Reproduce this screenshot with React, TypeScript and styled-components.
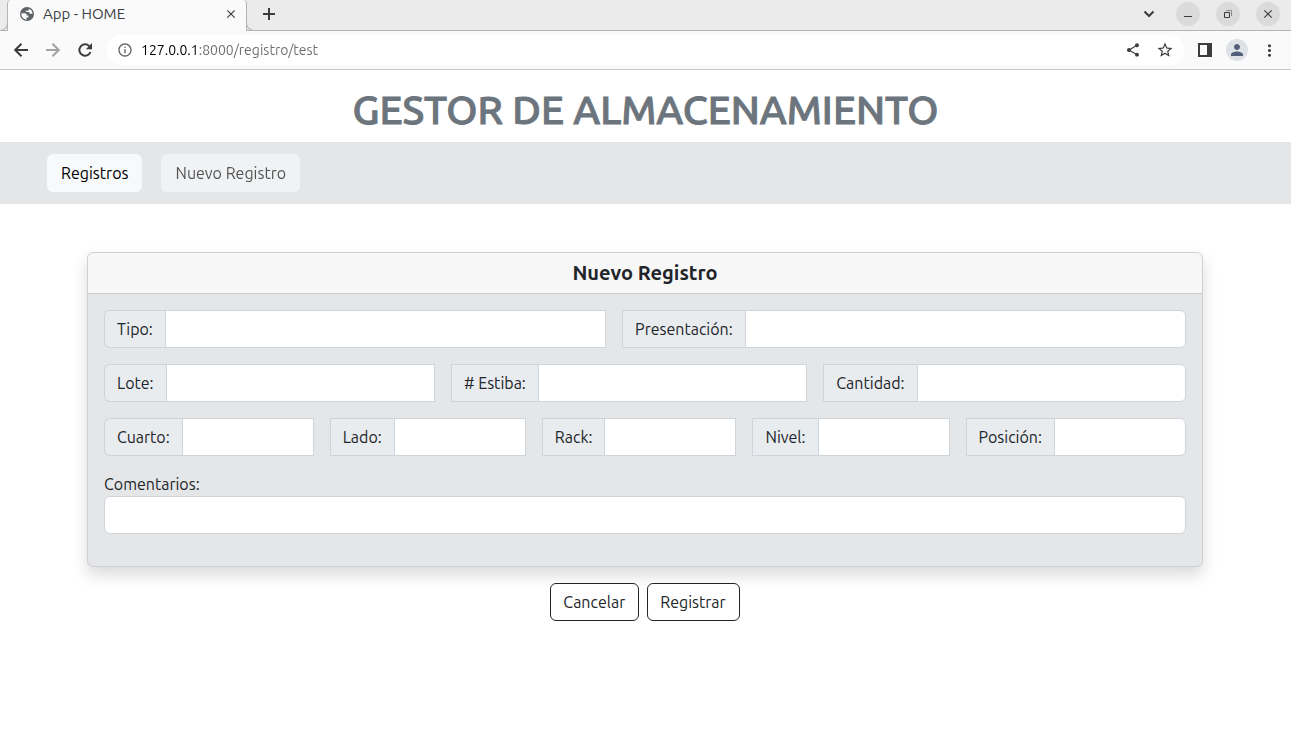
import React from "react";
import styled, { createGlobalStyle, css } from "styled-components";
import {
  MdClose,
  MdInfoOutline,
  MdMoreVert,
  MdPerson,
  MdShare,
  MdStarBorder,
} from "react-icons/md";

const GlobalStyle = createGlobalStyle`
  *, *::before, *::after { box-sizing: border-box; }
  body {
    margin: 0;
    background: #fff;
    color: #212529;
    font-family: Ubuntu, "Noto Sans", sans-serif;
    font-size: 16px;
    line-height: 24px;
  }
  button, input { font: inherit; color: inherit; }
`;

/* ---------- browser frame ---------- */

const TabStrip = styled.div`
  display: flex;
  align-items: center;
  height: 31px;
  padding: 0 11px 0 7px;
  background: #ebebeb;
  border-bottom: 1px solid #b4b4b4;
`;

const Tab = styled.div`
  position: relative;
  display: flex;
  align-items: center;
  align-self: flex-start;
  flex: 0 1 240px;
  height: 31px;
  margin-right: 8px;
  padding: 0 7px 3px 11px;
  background: #fafafa;
  border: solid #b4b4b4;
  border-width: 0 1px;
  border-radius: 4px 4px 0 0;
  color: #3c4043;
  font-size: 15px;

  &::before,
  &::after {
    content: "";
    position: absolute;
    bottom: 0;
    width: 8px;
    height: 8px;
    border-bottom: 1px solid #b4b4b4;
    background: #ebebeb;
  }
  &::before {
    left: -8px;
    border-right: 1px solid #b4b4b4;
    border-bottom-right-radius: 8px;
  }
  &::after {
    right: -8px;
    border-left: 1px solid #b4b4b4;
    border-bottom-left-radius: 8px;
  }
`;

const TabTitle = styled.span`
  flex: 1;
  margin-left: 8px;
`;

const Spacer = styled.div`
  flex: 1;
`;

const IconButton = styled.button<{ $size?: number; $fill?: string; $tone?: string }>`
  display: flex;
  align-items: center;
  justify-content: center;
  flex: none;
  width: ${(p) => p.$size ?? 32}px;
  height: ${(p) => p.$size ?? 32}px;
  padding: 0;
  border: 0;
  border-radius: 50%;
  background: ${(p) => p.$fill ?? "transparent"};
  color: ${(p) => p.$tone ?? "#3c3c3c"};
`;

const ProfileButton = styled(IconButton)`
  margin: 0 5px;
`;

const WindowControls = styled.div`
  display: flex;
  align-items: center;
  gap: 16px;
  padding-bottom: 2px;
`;

const Toolbar = styled.div`
  display: flex;
  align-items: center;
  height: 39px;
  padding: 0 6px 0 5px;
  background: #fafafa;
  border-bottom: 1px solid #c8c8c8;
`;

const AddressBar = styled.div`
  display: flex;
  align-items: center;
  flex: 1;
  height: 30px;
  margin: 0 5px 0 6px;
  padding: 0 3px 0 10px;
  border-radius: 16px;
  background: #fff;
`;

const AddressInput = styled.input`
  flex: 1;
  min-width: 0;
  margin-left: 8px;
  padding: 0;
  border: 0;
  outline: 0;
  color: #5f6368;
  font-size: 14px;
  line-height: 20px;
  background: linear-gradient(to right, #000 57px, #6b6b6b 57px);
  background-clip: text;
  -webkit-background-clip: text;
  -webkit-text-fill-color: transparent;
`;

/* ---------- page ---------- */

const Title = styled.h1`
  margin: 0;
  padding: 16px 16px 8px;
  color: #6c757d;
  font-size: 40px;
  font-weight: 500;
  -webkit-text-stroke: 1px #6c757d;
  line-height: 48px;
  text-align: center;
`;

const Nav = styled.nav`
  display: flex;
  gap: 19px;
  padding: 12px 47px;
  background: #e5e6e8;
`;

const buttonBase = css`
  height: 38px;
  padding: 6px 13px 6px 12px;
  border: 1px solid transparent;
  border-radius: 6px;
`;

const NavButton = styled.button<{ $dimmed?: boolean }>`
  ${buttonBase}
  padding: 6px 13px;
  background: #f8f9fa;
  color: #000;
  opacity: ${(p) => (p.$dimmed ? 0.65 : 1)};
`;

const Form = styled.form`
  max-width: 1141px;
  margin: 48px auto 0;
  padding: 0 13px 0 12px;
`;

const Card = styled.section`
  overflow: hidden;
  border: 1px solid #cfd0d2;
  border-radius: 6px;
  background: #e5e6e8;
  box-shadow: 0 8px 16px rgba(0, 0, 0, 0.15);
`;

const CardHeader = styled.h2`
  margin: 0;
  padding: 8px 16px;
  border-bottom: 1px solid #c9cacc;
  background: #f7f7f7;
  font-size: 20px;
  font-weight: 600;
  line-height: 24px;
  text-align: center;
`;

const CardBody = styled.div`
  display: flex;
  flex-direction: column;
  gap: 16px;
  padding: 16px 16px 32px;
`;

const FieldRow = styled.div`
  display: flex;

  label:first-child { margin-left: 0; border-radius: 6px 0 0 6px; }
  input:last-child { border-radius: 0 6px 6px 0; }
`;

const FieldLabel = styled.label`
  flex: none;
  margin-left: 16px;
  padding: 6px 12px;
  border: 1px solid #ced4da;
  border-right: 0;
  background: #e9ecef;
`;

const TextInput = styled.input`
  flex: 1 1 0;
  min-width: 0;
  height: 38px;
  padding: 6px 12px;
  border: 1px solid #ced4da;
  border-radius: 0;
  background: #fff;
`;

const Comments = styled.div`
  display: flex;
  flex-direction: column;
`;

const CommentsInput = styled(TextInput)`
  flex: none;
  border-radius: 6px;
`;

const Actions = styled.div`
  display: flex;
  justify-content: center;
  gap: 8px;
  padding: 16px 0;
`;

const OutlineButton = styled.button`
  ${buttonBase}
  border-color: #212529;
  background: #fff;
`;

const rows = [
  [["tipo", "Tipo:"], ["presentacion", "Presentación:"]],
  [["lote", "Lote:"], ["estiba", "# Estiba:"], ["cantidad", "Cantidad:"]],
  [["cuarto", "Cuarto:"], ["lado", "Lado:"], ["rack", "Rack:"], ["nivel", "Nivel:"], ["posicion", "Posición:"]],
];

const GlobeIcon = () => (
  <svg width="16" height="16" viewBox="0 0 16 16" aria-hidden="true">
    <circle cx="8" cy="8" r="7" fill="#5f6368" />
    <path d="M2.4 7.2h3.2c1.600 0 2.200.9 2.200 2.200h1.600v2.200H7.600v1.900C4.600 13.500 2.400 11 2.400 8zM9.800 2.700v.5c0 1-.8 1.500-1.700 1.500H6.800v1.400h2.600c1 0 1.300.8 1.300 1.600h2.800C13.500 5.300 12 3.400 9.800 2.700z" fill="#fafafa" />
  </svg>
);

/* Toolbar glyphs drawn with a two-pixel line */
const LineIcon = ({ d }: { d: string }) => (
  <svg width="16" height="16" viewBox="0 0 16 16" fill="none" stroke="currentColor" strokeWidth="2" aria-hidden="true">
    <path d={d} />
  </svg>
);

const ReloadIcon = () => (
  <svg width="16" height="16" viewBox="0 0 16 16" fill="none" aria-hidden="true">
    <path d="M13.400 10A5.700 5.700 0 1 1 12.200 4.100" stroke="currentColor" strokeWidth="2" />
    <path d="M15 1v6.200H8.800z" fill="currentColor" />
  </svg>
);

const RestoreIcon = () => (
  <svg width="10" height="10" viewBox="0 0 10 10" fill="none" aria-hidden="true">
    <path d="M3 1.500h5.500V7" stroke="#8a8a8a" />
    <path d="M1.500 3.500h5v5h-5z" stroke="#3c3c3c" />
  </svg>
);

const MinimizeIcon = () => (
  <svg width="10" height="10" viewBox="0 0 10 10" aria-hidden="true">
    <path d="M1 7h8v1H1z" fill="#3c3c3c" />
  </svg>
);

const SidePanelIcon = () => (
  <svg width="14" height="14" viewBox="0 0 14 14" aria-hidden="true">
    <path fillRule="evenodd" d="M0 0h14v14H0zM2 2v10h7V2z" fill="#3c3c3c" />
  </svg>
);

export default function App() {
  return (
    <>
      <GlobalStyle />
      <header>
        <TabStrip>
          <Tab>
            <GlobeIcon />
            <TabTitle>App - HOME</TabTitle>
            <IconButton $size={16} aria-label="Cerrar pestaña"><MdClose size={14} /></IconButton>
          </Tab>
          <IconButton $size={28} aria-label="Nueva pestaña"><LineIcon d="M8 1v12M2 7h12" /></IconButton>
          <Spacer />
          <WindowControls>
            <IconButton $size={24} aria-label="Buscar pestañas"><LineIcon d="M4.500 5.500L9 10l4.500-4.500" /></IconButton>
            <IconButton $size={24} $fill="#dadada" aria-label="Minimizar"><MinimizeIcon /></IconButton>
            <IconButton $size={24} $fill="#dadada" aria-label="Restaurar"><RestoreIcon /></IconButton>
            <IconButton $size={24} $fill="#dadada" aria-label="Cerrar"><MdClose size={14} /></IconButton>
          </WindowControls>
        </TabStrip>
        <Toolbar>
          <IconButton aria-label="Atrás"><LineIcon d="M15 8H2.500M8.500 1.700L2.200 8l6.300 6.300" /></IconButton>
          <IconButton $tone="#a3a3a3" aria-label="Adelante"><LineIcon d="M1 8h12.500M7.500 1.700L13.800 8l-6.300 6.300" /></IconButton>
          <IconButton aria-label="Recargar"><ReloadIcon /></IconButton>
          <AddressBar>
            <MdInfoOutline size={16} color="#5f6368" />
            <AddressInput aria-label="Dirección" defaultValue="127.0.0.1:8000/registro/test" />
            <IconButton aria-label="Compartir"><MdShare size={16} /></IconButton>
            <IconButton aria-label="Favorito"><MdStarBorder size={18} /></IconButton>
          </AddressBar>
          <IconButton aria-label="Panel lateral"><SidePanelIcon /></IconButton>
          <ProfileButton $size={22} $fill="#dee1e6" $tone="#54607a" aria-label="Perfil"><MdPerson size={18} /></ProfileButton>
          <IconButton aria-label="Menú"><MdMoreVert size={19} /></IconButton>
        </Toolbar>
      </header>
      <main>
        <Title>GESTOR DE ALMACENAMIENTO</Title>
        <Nav>
          <NavButton type="button">Registros</NavButton>
          <NavButton type="button" $dimmed>Nuevo Registro</NavButton>
        </Nav>
        <Form onSubmit={(e) => e.preventDefault()}>
          <Card>
            <CardHeader>Nuevo Registro</CardHeader>
            <CardBody>
              {rows.map((row, i) => (
                <FieldRow key={i}>
                  {row.map(([id, label]) => (
                    <React.Fragment key={id}>
                      <FieldLabel htmlFor={id}>{label}</FieldLabel>
                      <TextInput id={id} name={id} />
                    </React.Fragment>
                  ))}
                </FieldRow>
              ))}
              <Comments>
                <label htmlFor="comentarios">Comentarios:</label>
                <CommentsInput id="comentarios" name="comentarios" />
              </Comments>
            </CardBody>
          </Card>
          <Actions>
            <OutlineButton type="button">Cancelar</OutlineButton>
            <OutlineButton type="submit">Registrar</OutlineButton>
          </Actions>
        </Form>
      </main>
    </>
  );
}
